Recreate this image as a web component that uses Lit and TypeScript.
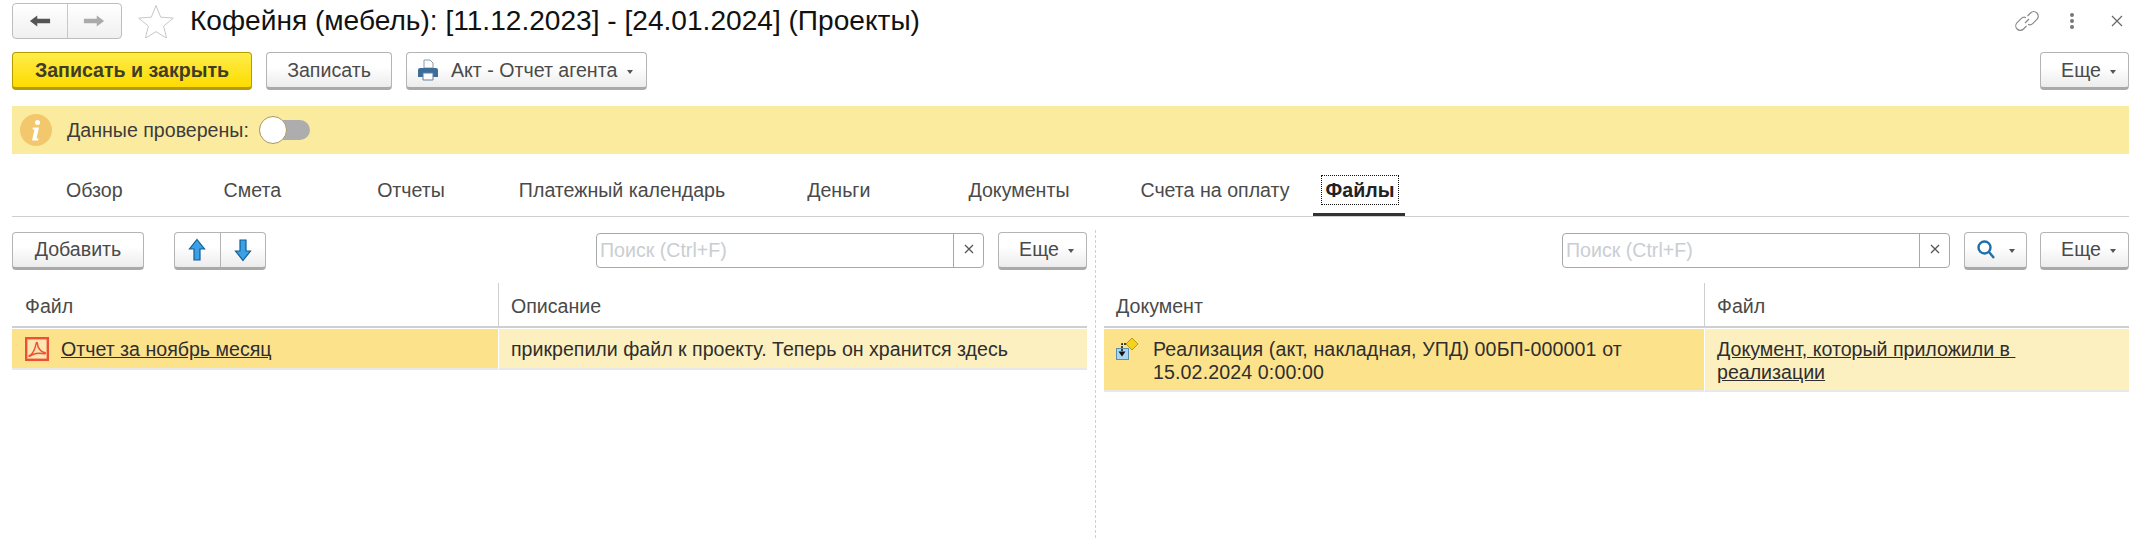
import { LitElement, css, html, svg } from 'lit';
import { customElement } from 'lit/decorators.js';

const TABS = ['Обзор', 'Смета', 'Отчеты', 'Платежный календарь', 'Деньги', 'Документы', 'Счета на оплату'];

const caret = html`<span class="caret"></span>`;

const arrowLeft = svg`<path d="M1 9 9 3v3.500h14v5H9V15z" />`;
const arrowRight = svg`<path d="M23 9 15 3v3.500H1v5h14V15z" />`;

@customElement('app-root')
export class AppRoot extends LitElement {
  static override styles = css`
    :host {
      display: block;
      width: 2145px;
      height: 538px;
      overflow: hidden;
      background: #fff;
      color: #4a4a4a;
      font: 19.6px/23px 'Liberation Sans', Arial, sans-serif;
    }

    .page {
      display: flex;
      flex-direction: column;
      height: 538px;
      padding: 3px 16px 0 12px;
      box-sizing: border-box;
    }

    .title-row {
      display: flex;
      align-items: center;
      height: 36px;
    }

    .nav {
      display: flex;
      width: 110px;
      height: 36px;
      box-sizing: border-box;
      border: 1px solid #bdbdbd;
      border-radius: 4px;
      background: linear-gradient(#fff, #f0f0f0);
    }

    .nav span {
      flex: 1;
      display: flex;
      align-items: center;
      justify-content: center;
    }

    .nav span + span {
      border-left: 1px solid #c8c8c8;
    }

    .nav svg {
      width: 22px;
      height: 18px;
    }

    .star {
      width: 36px;
      height: 34px;
      margin-left: 16px;
      flex: none;
    }

    h1 {
      margin: 0 0 0 16px;
      font-size: 28.1px;
      font-weight: 400;
      line-height: 36px;
      color: #111;
    }

    .window-icons {
      margin-left: auto;
      display: flex;
      align-items: center;
    }

    .window-icons .link {
      width: 24px;
      height: 24px;
      color: #8a8a8a;
    }

    .dots {
      display: flex;
      flex-direction: column;
      gap: 2px;
      margin-left: 31px;
    }

    .dots i {
      width: 4px;
      height: 4px;
      border-radius: 50%;
      background: #777;
    }

    .close {
      width: 12px;
      height: 12px;
      margin-left: 37px;
      margin-right: 6px;
    }

    .command-row {
      display: flex;
      gap: 14px;
      margin-top: 13px;
    }

    .btn {
      display: inline-flex;
      align-items: center;
      justify-content: center;
      height: 38px;
      box-sizing: border-box;
      flex: none;
      border: 1px solid #b4b4b4;
      border-bottom: 3px solid #a9a9a9;
      border-radius: 4px;
      background: linear-gradient(#fff 40%, #ececec);
      white-space: nowrap;
    }

    .primary {
      width: 240px;
      border-color: #b59c00;
      background: linear-gradient(#ffec4a, #fddc00);
      color: #403c2a;
      font-weight: 700;
    }

    .save {
      width: 126px;
    }

    .print {
      width: 241px;
      justify-content: flex-start;
      padding-left: 10px;
    }

    .print svg {
      width: 22px;
      height: 22px;
      margin-right: 12px;
    }

    .print .caret {
      margin-left: 10px;
    }

    .more {
      width: 89px;
      padding-left: 8px;
    }

    .more-top {
      margin-left: auto;
    }

    .caret {
      width: 0;
      height: 0;
      margin-left: 9px;
      margin-top: 3px;
      border: 3.5px solid transparent;
      border-top: 4px solid #555;
      border-bottom: 0;
    }

    .banner {
      display: flex;
      align-items: center;
      height: 48px;
      margin-top: 16px;
      padding-left: 8px;
      background: #fbeb9f;
      color: #3c3c3c;
    }

    .info {
      width: 32px;
      height: 32px;
      flex: none;
    }

    .banner-label {
      margin-left: 15px;
    }

    .toggle {
      position: relative;
      width: 51px;
      height: 20px;
      margin-left: 10px;
      border-radius: 10px;
      background: #adadad;
    }

    .toggle::before {
      content: '';
      position: absolute;
      left: 0;
      top: -4px;
      width: 26px;
      height: 26px;
      border: 1px solid #a59a66;
      border-radius: 50%;
      background: #fff;
    }

    .tabs {
      display: flex;
      height: 63px;
      box-sizing: border-box;
      border-bottom: 1px solid #cfcfcf;
    }

    .tab {
      margin-top: 22px;
      line-height: 28px;
      height: 28px;
      white-space: nowrap;
    }

    .tab:nth-child(1) {
      margin-left: 54px;
    }
    .tab:nth-child(2) {
      margin-left: 101px;
    }
    .tab:nth-child(3) {
      margin-left: 96px;
    }
    .tab:nth-child(4) {
      margin-left: 74px;
    }
    .tab:nth-child(5) {
      margin-left: 82px;
    }
    .tab:nth-child(6) {
      margin-left: 98px;
    }
    .tab:nth-child(7) {
      margin-left: 71px;
    }

    .tab-active {
      position: relative;
      margin-left: 32px;
      padding: 0 4px;
      outline: 1px dotted #111;
      color: #222;
      font-weight: 700;
    }

    .tab-active::after {
      content: '';
      position: absolute;
      left: -9px;
      right: -7px;
      top: 37px;
      height: 3px;
      background: #333;
    }

    .split {
      flex: 1;
      display: flex;
      min-height: 0;
    }

    .pane {
      flex: none;
      padding-top: 14px;
    }

    .pane-left {
      width: 1075px;
    }

    .pane-right {
      width: 1025px;
    }

    .gutter {
      width: 17px;
      display: flex;
      justify-content: center;
      padding-top: 13px;
    }

    .gutter::before {
      content: '';
      border-left: 1px dashed #cfcfcf;
    }

    .toolbar {
      display: flex;
      align-items: center;
      height: 39px;
    }

    .add {
      width: 132px;
    }

    .arrows {
      display: flex;
      width: 92px;
      margin-left: 30px;
      padding: 0;
    }

    .arrows span {
      flex: 1;
      display: flex;
      align-items: center;
      justify-content: center;
      height: 100%;
    }

    .arrows span + span {
      border-left: 1px solid #b4b4b4;
    }

    .arrows svg {
      width: 18px;
      height: 24px;
    }

    .search {
      display: flex;
      height: 35px;
      margin-left: auto;
      margin-right: 14px;
      box-sizing: border-box;
      border: 1px solid #a8a8a8;
      border-radius: 4px;
      background: #fff;
    }

    .search-field {
      width: 353px;
      padding-left: 3px;
      line-height: 33px;
      color: #c9ced3;
    }

    .search-clear {
      display: flex;
      align-items: center;
      justify-content: center;
      width: 30px;
      padding-bottom: 3px;
      box-sizing: border-box;
      border-left: 1px solid #a8a8a8;
    }

    .search-clear svg {
      width: 10px;
      height: 10px;
    }

    .find {
      width: 63px;
      margin-right: 13px;
    }

    .find svg {
      width: 20px;
      height: 22px;
    }

    .find .caret {
      margin-left: 13px;
    }

    .table {
      display: grid;
      margin-top: 13px;
    }

    .table-left {
      grid-template-columns: 486px 589px;
    }

    .table-right {
      grid-template-columns: 600px 425px;
    }

    .head {
      height: 45px;
      line-height: 46px;
      padding-left: 12px;
      box-sizing: border-box;
      border-bottom: 2px solid #cfcfcf;
    }

    .table-left .head:first-child {
      padding-left: 13px;
    }

    .head + .head {
      border-left: 1px solid #cfcfcf;
    }

    .cell {
      display: flex;
      align-items: center;
      box-sizing: border-box;
      margin-top: 1px;
      padding: 2px 12px 0;
      border-bottom: 2px solid #e8e8e8;
      color: #2e2e2e;
      line-height: 23px;
    }

    .table-left .cell {
      height: 41px;
    }

    .table-right .cell {
      height: 63px;
    }

    .current {
      background: #fde28c;
    }

    .selected {
      background: #fdf0c0;
      border-left: 1px solid #fff;
    }

    .cell a {
      color: inherit;
      text-decoration: underline;
    }

    .pdf {
      width: 24px;
      height: 24px;
      flex: none;
      margin: -2px 12px 0 1px;
    }

    .doc {
      width: 24px;
      height: 24px;
      flex: none;
      align-self: flex-start;
      margin: 6px 13px 0 0;
    }

    .doc-text {
      letter-spacing: 0.12px;
    }
  `;

  private renderMore(extra = '') {
    return html`<span class="btn more ${extra}">Еще ${caret}</span>`;
  }

  private renderSearch() {
    return html`
      <div class="search">
        <div class="search-field">Поиск (Ctrl+F)</div>
        <div class="search-clear">
          <svg viewBox="0 0 10 10" fill="none" stroke="#555" stroke-width="1.3">
            <path d="M1 1l8 8M9 1l-8 8" />
          </svg>
        </div>
      </div>
    `;
  }

  override render() {
    return html`
      <div class="page">
        <div class="title-row">
          <div class="nav">
            <span><svg viewBox="0 0 24 18" fill="#555">${arrowLeft}</svg></span>
            <span><svg viewBox="0 0 24 18" fill="#aaa">${arrowRight}</svg></span>
          </div>
          <svg class="star" viewBox="0 0 36 34" fill="#fff" stroke="#c4c8cc">
            <path d="M18 1.5l4.7 11.700 12.600.9-9.700 8 3.100 12.200L18 27.600 7.300 34.300l3.100-12.200-9.700-8 12.600-.9z" />
          </svg>
          <h1>Кофейня (мебель): [11.12.2023] - [24.01.2024] (Проекты)</h1>
          <div class="window-icons">
            <svg class="link" viewBox="0 0 24 24" fill="none" stroke="currentColor" stroke-width="1.2">
              <path d="M12.500 7l3-3a4.500 4.500 0 0 1 6.400 6.400l-4 4a4.500 4.500 0 0 1-4.900 1" />
              <path d="M11.500 17l-3 3a4.500 4.500 0 0 1-6.400-6.400l4-4a4.500 4.500 0 0 1 4.900-1" />
              <path d="M10 14l4-4" />
            </svg>
            <div class="dots"><i></i><i></i><i></i></div>
            <svg class="close" viewBox="0 0 12 12" fill="none" stroke="#666" stroke-width="1.2">
              <path d="M1 1l10 10M11 1L1 11" />
            </svg>
          </div>
        </div>

        <div class="command-row">
          <span class="btn primary">Записать и закрыть</span>
          <span class="btn save">Записать</span>
          <span class="btn print">
            <svg viewBox="0 0 22 22">
              <path d="M7 1h6l3 3v5H7z" fill="#fff" stroke="#8a9aaa" />
              <path d="M3 9h16a2 2 0 0 1 2 2v7h-5v-3H6v3H1v-7a2 2 0 0 1 2-2z" fill="#3f6d99" />
              <path d="M6 14h10v7H6z" fill="#fff" stroke="#5f7f9f" />
            </svg>
            Акт - Отчет агента ${caret}
          </span>
          ${this.renderMore('more-top')}
        </div>

        <div class="banner">
          <svg class="info" viewBox="0 0 32 32">
            <circle cx="16" cy="16" r="16" fill="#f3c76c" />
            <circle cx="17.500" cy="8.500" r="2.500" fill="#fff" />
            <path d="M13 13.500h6l-2.500 11h2l-.5 2h-6l2.500-11h-2z" fill="#fff" />
          </svg>
          <span class="banner-label">Данные проверены:</span>
          <div class="toggle"></div>
        </div>

        <div class="tabs">
          ${TABS.map((t) => html`<div class="tab">${t}</div>`)}
          <div class="tab-active tab">Файлы</div>
        </div>

        <div class="split">
          <section class="pane pane-left">
            <div class="toolbar">
              <span class="btn add">Добавить</span>
              <span class="btn arrows">
                <span>
                  <svg viewBox="0 0 18 24" fill="#3ba0e6" stroke="#0e5f96" stroke-width="1.2">
                    <path d="M9 1.500l7.500 9.500H12v11H6V11H1.500z" />
                  </svg>
                </span>
                <span>
                  <svg viewBox="0 0 18 24" fill="#3ba0e6" stroke="#0e5f96" stroke-width="1.2">
                    <path d="M9 22.500l7.500-9.500H12V2H6v11H1.500z" />
                  </svg>
                </span>
              </span>
              ${this.renderSearch()} ${this.renderMore()}
            </div>
            <div class="table table-left">
              <div class="head">Файл</div>
              <div class="head">Описание</div>
              <div class="cell current">
                <svg class="pdf" viewBox="0 0 24 24" fill="none" stroke="#ee5036">
                  <rect x="1.200" y="1.200" width="21.600" height="21.600" stroke-width="2.400" fill="#fde6b0" />
                  <path
                    stroke-width="1.500"
                    d="M4 19c3-1 6-6 7-12 .3-2 1.500-2 1.500 0 0 3 3 8 7 8.500 1.500.2 1 1.500-.5 1.200-4-.7-8-.5-11.500 1-2 .9-3.500 2-3.500 1.300z"
                  />
                </svg>
                <a>Отчет за ноябрь месяц</a>
              </div>
              <div class="cell selected">прикрепили файл к проекту. Теперь он хранится здесь</div>
            </div>
          </section>

          <div class="gutter"></div>

          <section class="pane pane-right">
            <div class="toolbar">
              ${this.renderSearch()}
              <span class="btn find">
                <svg viewBox="0 0 20 22" fill="none" stroke="#1f6ea8" stroke-width="2.400">
                  <circle cx="8.500" cy="8.500" r="6" />
                  <path d="M13 13l5 6" />
                </svg>
                ${caret}
              </span>
              ${this.renderMore()}
            </div>
            <div class="table table-right">
              <div class="head">Документ</div>
              <div class="head">Файл</div>
              <div class="cell current">
                <svg class="doc" viewBox="0 0 24 24">
                  <path d="M16 1l6 6-6 6-6-6z" fill="#f7d21c" stroke="#b89a14" />
                  <rect x="0.500" y="11.500" width="12" height="11" fill="#a8d6f2" stroke="#5a8fb0" />
                  <path d="M10 7H6v8" fill="none" stroke="#111" stroke-dasharray="2 1" stroke-width="1.500" />
                  <path d="M2.500 14.500h7L6 19.500z" fill="#111" />
                </svg>
                <span class="doc-text">Реализация (акт, накладная, УПД) 00БП-000001 от<br />15.02.2024 0:00:00</span>
              </div>
              <div class="cell selected">
                <a>Документ, который приложили в&nbsp;<br />реализации</a>
              </div>
            </div>
          </section>
        </div>
      </div>
    `;
  }
}

declare global {
  interface HTMLElementTagNameMap {
    'app-root': AppRoot;
  }
}
